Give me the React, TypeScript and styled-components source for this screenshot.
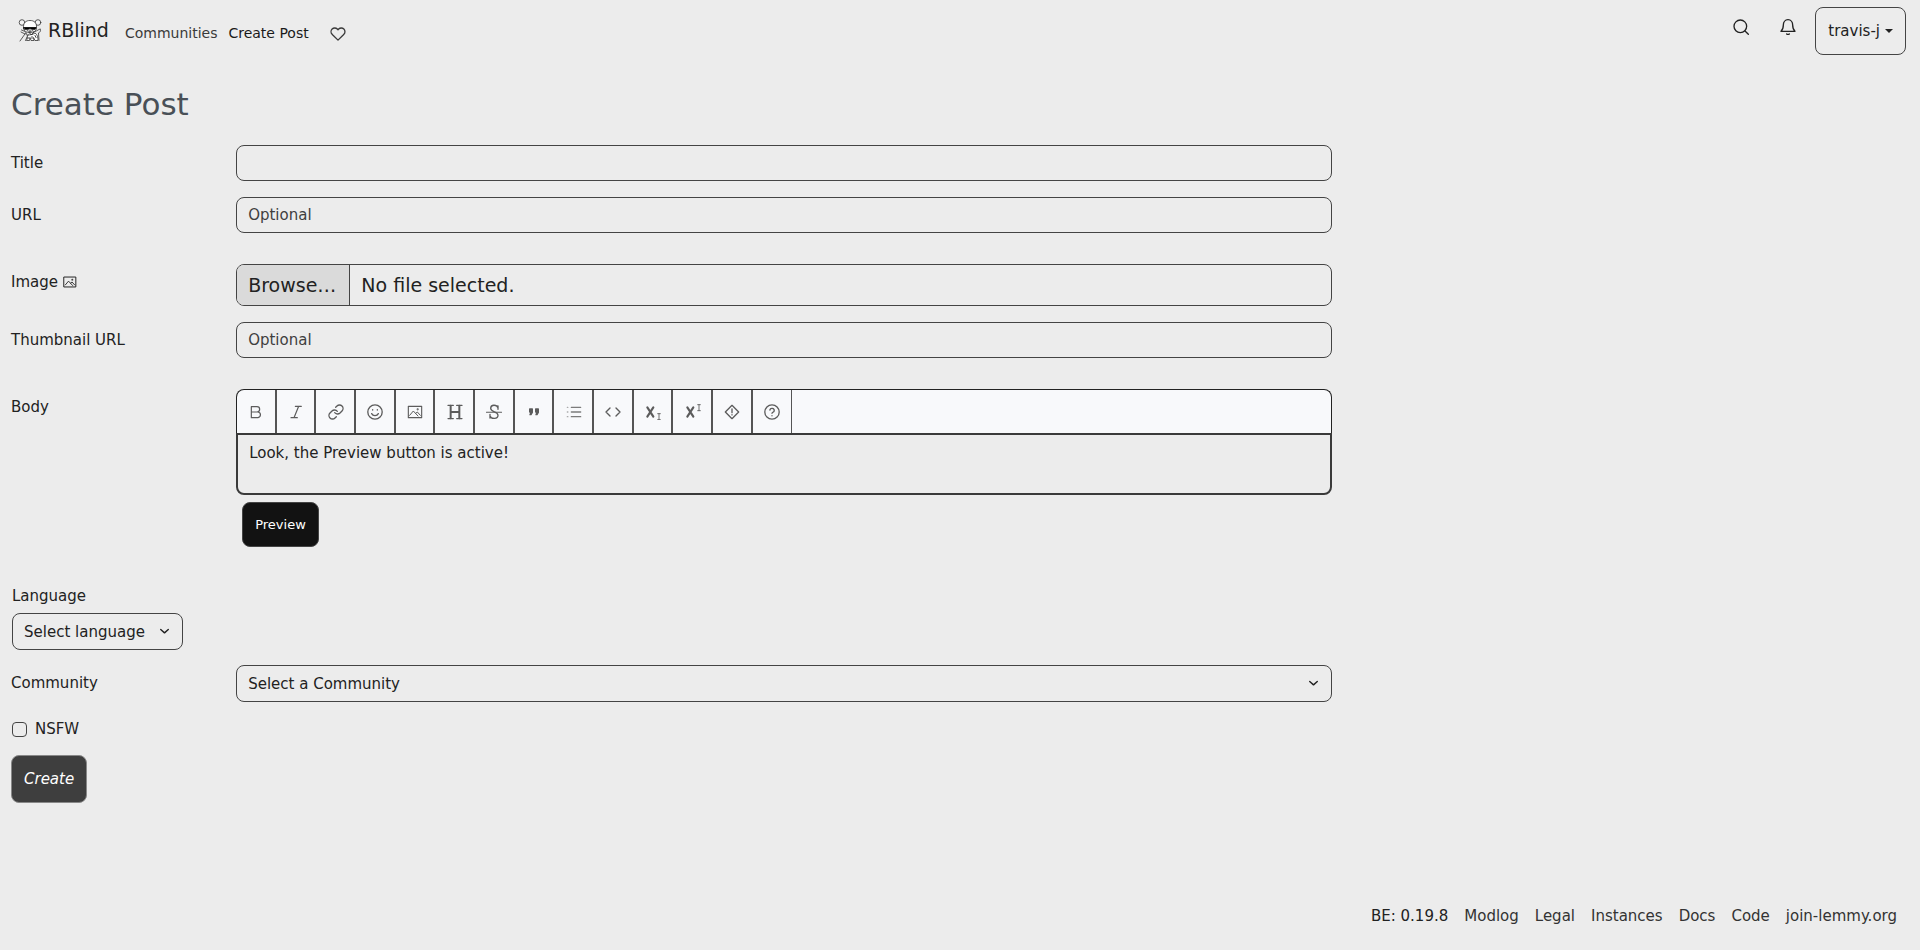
import React from "react";
import styled, { createGlobalStyle, css } from "styled-components";

const border = "#444444";
const ink = "#222222";

const GlobalStyle = createGlobalStyle`
  *, *::before, *::after { box-sizing: border-box; }
  body {
    margin: 0;
    background: #ececec;
    color: ${ink};
    font-family: "DejaVu Sans", Verdana, sans-serif;
    font-size: 15px;
    line-height: 22px;
  }
  button, input, select, textarea { font: inherit; color: inherit; }
`;

const Page = styled.div`
  min-height: 100vh;
  display: flex;
  flex-direction: column;
`;

const Navbar = styled.nav`
  display: flex;
  justify-content: space-between;
  align-items: flex-start;
  padding: 7px 14px 0 18px;
`;

const NavStart = styled.div`
  display: flex;
  align-items: center;
  height: 48px;
`;

const Brand = styled.a`
  display: flex;
  align-items: center;
  gap: 6px;
  margin-right: 16px;
  color: ${ink};
  font-size: 19px;
  line-height: 28px;
  text-decoration: none;
  padding-bottom: 2px;
`;

const NavLink = styled.a<{ $active?: boolean }>`
  display: flex;
  margin-right: 11px;
  padding-top: 4px;
  color: ${(p) => (p.$active ? "#1a1a1a" : "#3a3a3a")};
  font-size: 14px;
  line-height: 20px;
  text-decoration: none;
`;

const HeartLink = styled(NavLink)`
  margin-left: 10px;
  padding-top: 6px;
`;

const NavEnd = styled.div`
  display: flex;
  align-items: flex-start;
`;

const NavIcon = styled.a`
  display: flex;
  margin-right: 31px;
  padding-top: 12px;
  color: ${ink};
`;

const BellIcon = styled(NavIcon)`
  margin-right: 19px;
`;

const UserButton = styled.button`
  display: flex;
  align-items: center;
  gap: 5px;
  height: 48px;
  padding: 0 12px;
  border: 1px solid ${border};
  border-radius: 8px;
  background: transparent;
`;

const Caret = styled.span`
  border: 4px solid transparent;
  border-top-color: currentColor;
  border-bottom: 0;
`;

const Main = styled.main`
  width: 70%;
  padding: 29px 12px 0 11px;
`;

const Heading = styled.h1`
  margin: 0 0 21px;
  color: #495057;
  font-size: 31px;
  font-weight: 400;
  line-height: 40px;
`;

const Row = styled.div<{ $loose?: boolean }>`
  display: grid;
  grid-template-columns: 1fr 5fr;
  margin-bottom: ${(p) => (p.$loose ? 31 : 16)}px;
`;

const Label = styled.label`
  display: flex;
  align-items: center;
  gap: 5px;
  height: 36px;
  padding-bottom: 1px;
`;

const Field = styled.div`
  margin-left: 5px;
  min-width: 0;
`;

const controlBox = css`
  width: 100%;
  border: 1px solid ${border};
  border-radius: 8px;
  background: transparent;
`;

const TextInput = styled.input`
  ${controlBox}
  display: block;
  height: 36px;
  padding: 0 11px;
  &::placeholder { color: #3f3f3f; opacity: 1; }
`;

const HiddenFile = styled.input`
  position: absolute;
  width: 1px;
  height: 1px;
  opacity: 0;
`;

const FileBox = styled.label`
  ${controlBox}
  display: flex;
  height: 42px;
  overflow: hidden;
  font-size: 19px;
  line-height: 40px;
`;

const FileButton = styled.span`
  padding: 0 13px 0 11px;
  border-right: 1px solid ${border};
  background: #dadada;
`;

const FileName = styled.span`
  padding: 0 11px;
`;

const Toolbar = styled.div`
  display: flex;
  height: 44px;
  overflow: hidden;
  border: 1px solid #222222;
  border-bottom: 0;
  border-radius: 8px 8px 0 0;
  background: #f8f9fb;
`;

const ToolGrid = styled.div`
  display: grid;
  grid-template-columns: repeat(14, 1fr);
  width: 555px;
`;

const Tool = styled.button`
  display: flex;
  align-items: center;
  justify-content: center;
  padding: 0 0 0 1px;
  border: 0;
  border-right: 2px solid #555555;
  background: transparent;
  color: #5c5c5c;
  &:last-child { padding: 0; border-right-width: 1px; }
`;

const Body = styled.textarea`
  ${controlBox}
  display: block;
  height: 62px;
  padding: 7px 11px;
  border: 2px solid #3a3a3a;
  border-radius: 0 0 8px 8px;
  resize: none;
`;

const PreviewButton = styled.button`
  height: 45px;
  margin: 7px 0 0 6px;
  padding: 0 12px;
  border: 1px solid #444444;
  border-radius: 8px;
  background: #121212;
  color: #ffffff;
  font-size: 13px;
`;

const LanguageGroup = styled.div`
  display: flex;
  flex-direction: column;
  align-items: flex-start;
  gap: 6px;
  margin: 38px 0 15px 1px;
`;

const SelectWrap = styled.div`
  display: grid;
  align-items: center;
  > * { grid-area: 1 / 1; }
  > svg { justify-self: end; margin-right: 13px; pointer-events: none; }
`;

const Select = styled.select`
  ${controlBox}
  appearance: none;
  height: 37px;
  padding: 0 37px 0 11px;
`;

const CheckRow = styled.label`
  display: flex;
  align-items: center;
  gap: 8px;
  width: max-content;
  margin-left: 1px;
`;

const Checkbox = styled.input`
  appearance: none;
  width: 15px;
  height: 15px;
  margin: 0;
  border: 1px solid ${border};
  border-radius: 4px;
  &:checked { background: ${border}; }
`;

const CreateButton = styled.button`
  height: 48px;
  margin: 15px 0 0;
  padding: 0 12px;
  border: 1px solid #888888;
  border-radius: 8px;
  background: #3e3e3e;
  color: #ffffff;
  font-style: italic;
`;

const Footer = styled.footer`
  display: flex;
  justify-content: flex-end;
  gap: 16px;
  margin-top: auto;
  padding: 24px 23px 23px;
`;

const FooterLink = styled.a`
  color: #333333;
  text-decoration: none;
`;

type IconProps = { size?: number; stroke?: number; children: React.ReactNode };

const Icon = ({ size = 16, stroke = 2, children }: IconProps) => (
  <svg
    width={size}
    height={size}
    viewBox="0 0 24 24"
    fill="none"
    stroke="currentColor"
    strokeWidth={stroke}
    strokeLinecap="round"
    strokeLinejoin="round"
    aria-hidden="true"
  >
    {children}
  </svg>
);

const Chevron = () => (
  <svg width="11" height="11" viewBox="0 0 16 16" fill="none" stroke="#222" strokeWidth="2" strokeLinecap="round" strokeLinejoin="round" aria-hidden="true">
    <path d="m2.500 5 5.500 5 5.500-5" />
  </svg>
);

const Logo = () => (
  <svg width="24" height="24" viewBox="0 0 24 24" fill="none" stroke="#333" strokeWidth="0.8" strokeLinecap="round" aria-hidden="true">
    <circle cx="4" cy="4.500" r="2.800" fill="#f4f4f4" />
    <circle cx="20" cy="4.500" r="2.800" fill="#f4f4f4" />
    <path d="M5.500 10C5 4.500 8 2.500 12 2.500s7 2 6.500 7.500c0 3-3 4.500-6.500 4.500S5.500 13 5.500 10z" fill="#fff" />
    <path d="M6 9.500h12l-.8 1.800h-3.500L12 10.200l-1.700 1.100H6.800z" fill="#000" stroke="#000" />
    <path d="M9 12.500c1.500 1.300 4.500 1.300 6 0M12 11v2" />
    <path d="M7 13.500 3.500 12M3 14l4 2M8 14.500l-6 8.500M8 15l1.500 3-2 4.500M15.500 14c2 0 4-2 6.500-3M22.500 11.500c.5 2-1 3-2 3.500l.5 7.500" />
    <path d="M10 17c-1 2-.5 4-1.500 5.500h3l.5-3 1 3h3l-.5-3 1.500 3h3c0-3-.5-6-3-7.500-2 1.500-5 2-7 2z" fill="#fff" />
    <path d="M11 14.500l2.500 2.500 2-2.500M14 18.500v2M17 17.500l1 2M10 20h1" stroke="#111" />
  </svg>
);

const picture = (
  <>
    <path d="M2 3.500h20v17H2z" strokeWidth="1.700" />
    <path d="m4 17 5.500-6.500 7 7.500M13 14l2.500-2 4.500 5" strokeWidth="1.500" />
    <circle cx="16" cy="8" r=".6" />
  </>
);

const tools: { name: string; art: React.ReactNode }[] = [
  { name: "Bold", art: <Icon stroke={1.8}><path d="M5 4h8.500a4 4 0 0 1 0 8H5zM5 12h10a4.300 4.300 0 0 1 0 8.500H5z" /></Icon> },
  { name: "Italic", art: <Icon stroke={1.8}><path d="M20 3.500h-9M14 20.500H4.500M16 3.500 9 20.500" /></Icon> },
  {
    name: "Link",
    art: (
      <Icon>
        <path d="M10 13a5.500 5.500 0 0 0 8 .5l3-3a5.300 5.300 0 0 0-7.500-7.500L11.500 5" />
        <path d="M14 11a5.500 5.500 0 0 0-8-.5l-3 3a5.300 5.300 0 0 0 7.500 7.500l2-2" />
      </Icon>
    ),
  },
  {
    name: "Emoji",
    art: (
      <Icon>
        <circle cx="12" cy="12" r="10.800" />
        <path d="M7 14.500c2 4 8 4 10 0M8.500 8.500v.5M15.500 8.500v.5" />
      </Icon>
    ),
  },
  { name: "Image", art: <Icon>{picture}</Icon> },
  {
    name: "Header",
    art: (
      <Icon>
        <path d="M5.500 2.500v19M18.500 2.500v19M5.500 12h13" strokeWidth="3" />
        <path d="M1.500 2.200h8M14.500 2.200h8M1.500 21.800h8M14.500 21.800h8" strokeWidth="1.800" />
      </Icon>
    ),
  },
  {
    name: "Strikethrough",
    art: (
      <Icon>
        <path d="M18 8V3M18 5.500C16 .5 7 .5 7 6.500c0 6.500 11 4 11 10.500 0 6-10 6-12 1M6 15.500V21" />
        <path d="M0.500 12.500h23" strokeWidth="1.600" />
      </Icon>
    ),
  },
  {
    name: "Quote",
    art: (
      <Icon>
        <path d="M5.500 7.500h4v5L7.500 16H6l1.500-4h-2zM14.500 7.500h4v5l-2 3.500H15l1.500-4h-2z" fill="currentColor" />
      </Icon>
    ),
  },
  {
    name: "List",
    art: (
      <Icon>
        <path d="M8 5h14M8 12h14M8 19h14" opacity=".8" />
        <path d="M2 5h.8M2 12h.8M2 19h.8" opacity=".5" />
      </Icon>
    ),
  },
  { name: "Code", art: <Icon><path d="m16.500 18 6-6-6-6M7.500 6l-6 6 6 6" /></Icon> },
  {
    name: "Subscript",
    art: (
      <Icon>
        <path d="M3.500 5l9 14M12.500 5l-9 14" strokeWidth="3.200" />
        <path d="M19 14.500h4M21 14.500v9M19 23.500h4" strokeWidth="1.300" />
      </Icon>
    ),
  },
  {
    name: "Superscript",
    art: (
      <Icon>
        <path d="M3.500 5l9 14M12.500 5l-9 14" strokeWidth="3.200" />
        <path d="M19 1h4M21 1v9M19 10h4" strokeWidth="1.300" />
      </Icon>
    ),
  },
  {
    name: "Spoiler",
    art: (
      <Icon>
        <path d="m12 2 10 10-10 10L2 12z" />
        <path d="M12 7.500v5.500M12 16v.4" />
      </Icon>
    ),
  },
  {
    name: "Help",
    art: (
      <Icon>
        <circle cx="12" cy="12" r="10.800" />
        <path d="M8.800 9a3.300 3.300 0 0 1 6.500 1c0 2.200-3.300 2.500-3.300 4M12 17.500v.2" />
      </Icon>
    ),
  },
];

const footerLinks = ["Modlog", "Legal", "Instances", "Docs", "Code", "join-lemmy.org"];

export default function App() {
  return (
    <Page>
      <GlobalStyle />
      <Navbar>
        <NavStart>
          <Brand href="#">
            <Logo />
            RBlind
          </Brand>
          <NavLink href="#">Communities</NavLink>
          <NavLink href="#" $active>Create Post</NavLink>
          <HeartLink href="#" aria-label="Support Lemmy">
            <Icon>
              <path d="M20.800 4.600a5.500 5.500 0 0 0-7.800 0L12 5.700l-1-1.100a5.500 5.500 0 0 0-7.800 7.800l1 1.100L12 21.200l7.800-7.700 1-1.100a5.500 5.500 0 0 0 0-7.800z" />
            </Icon>
          </HeartLink>
        </NavStart>
        <NavEnd>
          <NavIcon href="#" aria-label="Search">
            <Icon>
              <circle cx="11" cy="11" r="9.500" />
              <path d="m18 18 5 5" />
            </Icon>
          </NavIcon>
          <BellIcon href="#" aria-label="Notifications">
            <Icon>
              <path d="M1.500 18.500h21C19.500 16 19 13 19 9c0-4-2.500-8-7-8S5 5 5 9c0 4-.5 7-3.500 9.500zM10 22.500c1 .8 3 .8 4 0" />
            </Icon>
          </BellIcon>
          <UserButton type="button">
            travis-j
            <Caret />
          </UserButton>
        </NavEnd>
      </Navbar>

      <Main>
        <Heading>Create Post</Heading>
        <form onSubmit={(e) => e.preventDefault()}>
          <Row>
            <Label htmlFor="title">Title</Label>
            <Field><TextInput id="title" type="text" /></Field>
          </Row>
          <Row $loose>
            <Label htmlFor="url">URL</Label>
            <Field><TextInput id="url" type="url" placeholder="Optional" /></Field>
          </Row>
          <Row>
            <Label htmlFor="image">
              Image <Icon size={14}>{picture}</Icon>
            </Label>
            <Field>
              <HiddenFile id="image" type="file" />
              <FileBox htmlFor="image">
                <FileButton>Browse…</FileButton>
                <FileName>No file selected.</FileName>
              </FileBox>
            </Field>
          </Row>
          <Row $loose>
            <Label htmlFor="thumbnail">Thumbnail URL</Label>
            <Field><TextInput id="thumbnail" type="url" placeholder="Optional" /></Field>
          </Row>
          <Row>
            <Label htmlFor="body">Body</Label>
            <Field>
              <Toolbar>
                <ToolGrid>
                  {tools.map((tool) => (
                    <Tool key={tool.name} type="button" aria-label={tool.name}>{tool.art}</Tool>
                  ))}
                </ToolGrid>
              </Toolbar>
              <Body id="body" defaultValue="Look, the Preview button is active!" />
              <PreviewButton type="button">Preview</PreviewButton>
            </Field>
          </Row>
          <LanguageGroup>
            <label htmlFor="language">Language</label>
            <SelectWrap>
              <Select id="language"><option>Select language</option></Select>
              <Chevron />
            </SelectWrap>
          </LanguageGroup>
          <Row>
            <Label htmlFor="community">Community</Label>
            <Field>
              <SelectWrap>
                <Select id="community"><option>Select a Community</option></Select>
                <Chevron />
              </SelectWrap>
            </Field>
          </Row>
          <CheckRow>
            <Checkbox type="checkbox" />
            NSFW
          </CheckRow>
          <CreateButton type="submit">Create</CreateButton>
        </form>
      </Main>

      <Footer>
        <span>BE: 0.19.8</span>
        {footerLinks.map((text) => (
          <FooterLink key={text} href="#">{text}</FooterLink>
        ))}
      </Footer>
    </Page>
  );
}
